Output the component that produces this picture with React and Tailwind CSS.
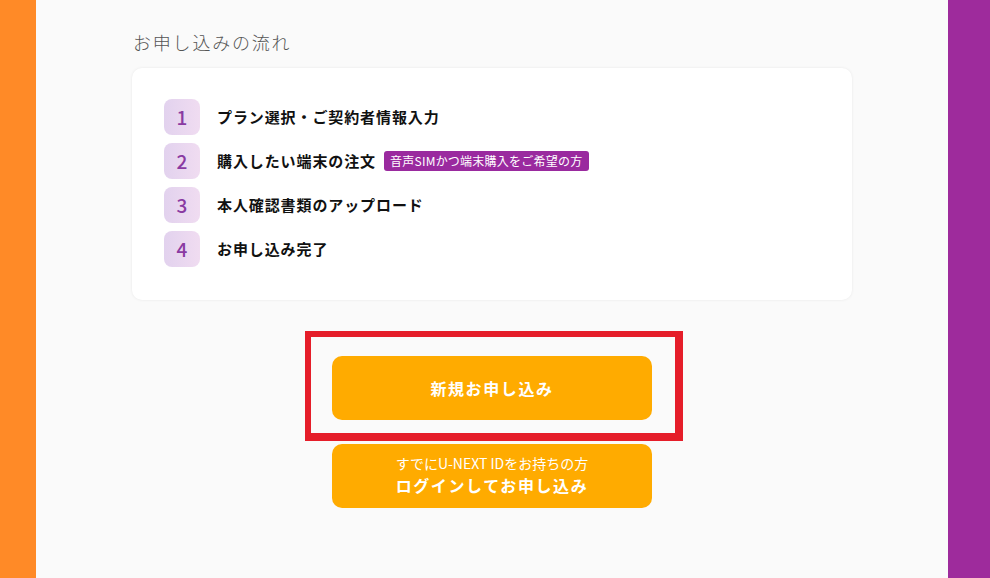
import React from 'react'

const steps = [
  { no: 1, label: 'プラン選択・ご契約者情報入力' },
  { no: 2, label: '購入したい端末の注文', tag: '音声SIMかつ端末購入をご希望の方' },
  { no: 3, label: '本人確認書類のアップロード' },
  { no: 4, label: 'お申し込み完了' },
]

const StepRow = ({ no, label, tag }) => (
  <li className="flex items-center h-[36px]">
    <div className="w-[36px] h-[36px] rounded-[8px] bg-gradient-to-r from-[#e2d2ee] to-[#f0dcf1] flex items-center justify-center text-[19px] font-medium text-[#8a3aa2]">
      {no}
    </div>
    <span className="ml-[17px] text-[15px] font-bold text-[#111] tracking-[0.06em]">{label}</span>
    {tag && (
      <span className="ml-[8px] h-[20px] px-[6px] rounded-[3px] bg-[#9a2a9f] text-white text-[12px] tracking-[0.02em] leading-[20px]">
        {tag}
      </span>
    )}
  </li>
)

export default function App() {
  return (
    <div
      className="flex h-[578px] w-full overflow-hidden"
      style={{ fontFamily: '"Noto Sans CJK JP", "Noto Sans", sans-serif' }}
    >
      {/* side bars */}
      <div className="w-[36px] shrink-0 bg-[#ff8a27]" />
      <main className="flex-1 bg-[#fafafa]">
        <div className="w-[720px] mx-auto pt-[29px]">
          <h2 className="text-[18px] leading-[27px] font-light text-[#555] tracking-[0.1em] pl-[1px]">
            お申し込みの流れ
          </h2>

          {/* Flow card */}
          <div className="mt-[12px] bg-white rounded-[10px] shadow-[0_0_3px_rgba(0,0,0,0.08)] pt-[31px] pb-[33px] px-[32px]">
            <ol className="flex flex-col gap-[8px]">
              {steps.map((s) => (
                <StepRow key={s.no} {...s} />
              ))}
            </ol>
          </div>

          {/* Buttons */}
          <div className="mt-[31px] flex flex-col items-center">
            <div className="ml-[4px] border-[#e51d29] border-l-[6px] border-t-[6px] border-r-[8px] border-b-[8px] pt-[19px] pl-[21px] pr-[23px] pb-[13px]">
              <button className="w-[320px] h-[64px] rounded-[10px] bg-[#ffab00] text-white text-[16px] font-bold tracking-[0.1em]">
                新規お申し込み
              </button>
            </div>
            <button className="mt-[3px] w-[320px] h-[64px] rounded-[10px] bg-[#ffab00] text-white flex flex-col items-center justify-center pb-[2px]">
              <span className="text-[14px] leading-[19px]">すでにU-NEXT IDをお持ちの方</span>
              <span className="text-[16px] leading-[24px] font-bold tracking-[0.1em]">ログインしてお申し込み</span>
            </button>
          </div>
        </div>
      </main>
      <div className="w-[42px] shrink-0 bg-[#9e2b9c]" />
    </div>
  )
}
